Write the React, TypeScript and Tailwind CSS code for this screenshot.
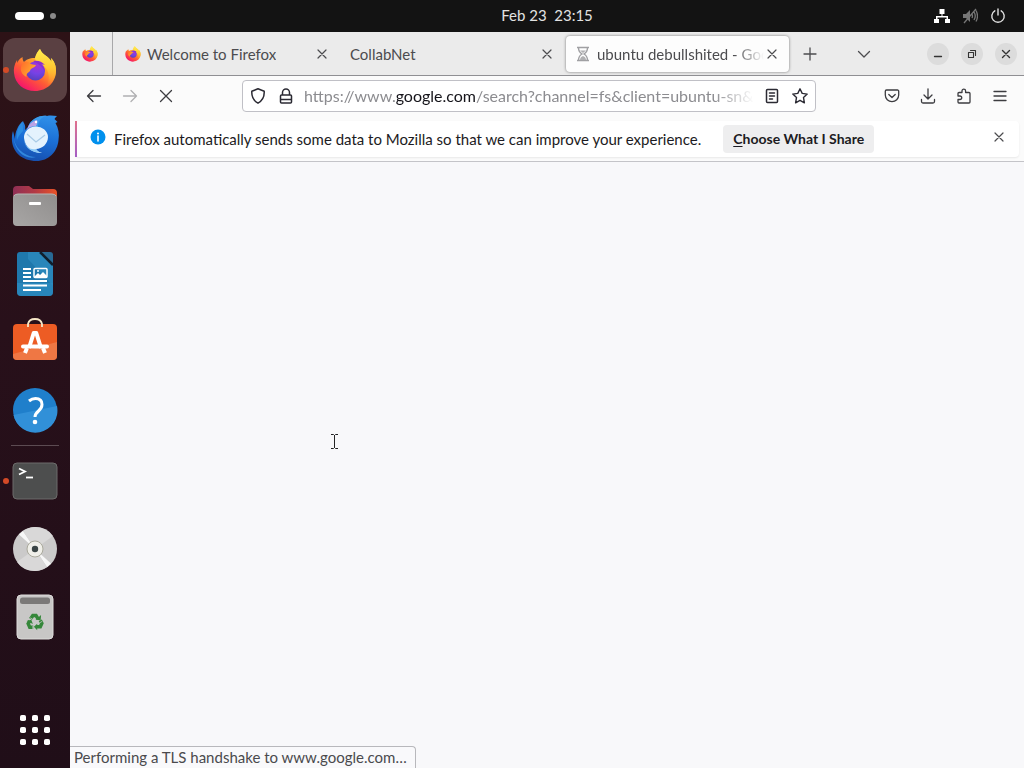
import { useId, useState, type ReactNode } from "react";

type IconProps = { className?: string };

function FirefoxLogo({ className }: IconProps) {
  const id = useId();
  return (
    <svg viewBox="0 0 44 44" className={className} aria-hidden="true">
      <defs>
        <linearGradient id={`${id}-body`} x1="0.85" y1="0.1" x2="0.25" y2="0.95">
          <stop offset="0" stopColor="#ffe04a" />
          <stop offset="0.35" stopColor="#ffa62b" />
          <stop offset="0.65" stopColor="#ff5a36" />
          <stop offset="1" stopColor="#f5156c" />
        </linearGradient>
        <linearGradient id={`${id}-flame`} x1="0.5" y1="0" x2="0.5" y2="1">
          <stop offset="0" stopColor="#fff04f" />
          <stop offset="0.5" stopColor="#ffc933" />
          <stop offset="1" stopColor="#ff9a2e" stopOpacity="0" />
        </linearGradient>
        <radialGradient id={`${id}-globe`} cx="0.6" cy="0.2" r="0.9">
          <stop offset="0" stopColor="#a634d6" />
          <stop offset="0.5" stopColor="#7542e5" />
          <stop offset="1" stopColor="#4f3fb5" />
        </radialGradient>
        <linearGradient id={`${id}-head`} x1="0" y1="0" x2="1" y2="0.6">
          <stop offset="0" stopColor="#ff6a2b" />
          <stop offset="1" stopColor="#ffb12e" />
        </linearGradient>
      </defs>
      <path
        d="M27 1c-2 2-4 5-5 9-6 0-9 2-11 4-1-1-1.500-3-1.500-5C6 11 5 13 4.500 15 4.500 14 4 13 4 12 1 17 .5 21 1 25c1 11 10 18 21 18 12 0 21-9 21-20 0-6-2-10-5-13 .5 2 .5 3 .5 4C36 8 29 7 27 1z"
        fill={`url(#${id}-body)`}
      />
      <path d="M27 1c2 6 9 7 11.500 13 0-1 0-2-.5-4 3 3 5 7 5 13 0 6-4 12-9 15 4-10 1-18-5-21-4-2-7-4-7-7 1-4 3-7 5-9z" fill={`url(#${id}-flame)`} />
      <circle cx="22.500" cy="23" r="9.500" fill={`url(#${id}-globe)`} />
      <path d="M20 13c4-1 9 0 12 4-2-1-3-1-4-.5 3 2 4 5 4 7-3-6-8-8-12-10.500z" fill="#8b2fd0" />
      <path
        d="M11 14c2-.5 4 0 5.500 1 2 1.500 4.500 1.500 6.500 2-.5 2-3 2.500-5 4-1 .8-.6 2-2 3-1.500 1-3 2-2.500 5C10 27 7 24 8 19c.5-2 1.500-4 3-5z"
        fill={`url(#${id}-head)`}
      />
    </svg>
  );
}

function ThunderbirdLogo({ className }: IconProps) {
  const id = useId();
  return (
    <svg viewBox="0 0 50 48" className={className} aria-hidden="true">
      <defs>
        <linearGradient id={`${id}-b`} x1="0.6" y1="0" x2="0.4" y2="1">
          <stop offset="0" stopColor="#2f8fe8" />
          <stop offset="0.5" stopColor="#1b6fd6" />
          <stop offset="1" stopColor="#164fae" />
        </linearGradient>
      </defs>
      <path
        d="M18 13c3-8 11-12 19-11 4-1 7 0 10 0-1 1-2 2-2.500 3l3 3-2 1c3 5 4 11 3 17-1 12-10 21-22 21C12 47 3 38 2 27c-.3-4 0-7 1-10l2 8c0-7 3-14 8-18 1 3 3 4 2 9z"
        fill={`url(#${id}-b)`}
      />
      <path d="M12 8c-4 5-6 11-5 18 1-3 3-6 6-9 0-4 0-6-1-9z" fill="#2b8ce0" />
      <path d="M18 13c3-8 11-12 19-11-6 1-9 5-9 11-4 0-6-1-10 0z" fill="#3a9bea" />
      <path d="M27 6c-5 1-9 5-10 10 2-3 5-4 9-4 1-2 2-4 1-6z" fill="#b9a3e6" />
      <circle cx="26" cy="8" r="1.200" fill="#fff" />
      <path d="M4 25c2 12 14 18 22 18-10 3-21-5-22-18z" fill="#3d9cec" opacity="0.700" />
      <path d="M14 24a12 11 0 0 1 24-1c0 7-6 12-12 12 1 2 3 3 6 4-10 0-17-6-18-15z" fill="#e4f2fd" />
      <path d="M14 26c2 8 7 10 12 9 1 2 3 3 6 4-10 0-17-5-18-13z" fill="#8cc9f6" />
      <path d="M17 20l9 8 9-7" fill="none" stroke="#a9cbe6" strokeWidth="1.300" />
    </svg>
  );
}

function FilesLogo() {
  const id = useId();
  return (
    <svg viewBox="0 0 46 42" className="h-[42px] w-[46px]" aria-hidden="true">
      <defs>
        <linearGradient id={`${id}-t`}>
          <stop offset="0" stopColor="#8f2f55" />
          <stop offset="0.500" stopColor="#b33a45" />
          <stop offset="1" stopColor="#ea5327" />
        </linearGradient>
        <linearGradient id={`${id}-f`} x1="0" y1="1" x2="1" y2="0">
          <stop offset="0" stopColor="#a8a6a5" />
          <stop offset="1" stopColor="#908e8d" />
        </linearGradient>
      </defs>
      <path d="M1 5a4 4 0 0 1 4-4h12l4 3h20a4 4 0 0 1 4 4v12H1z" fill={`url(#${id}-t)`} />
      <rect x="1" y="9" width="44" height="32" rx="4" fill={`url(#${id}-f)`} />
      <path d="M2 11q1-2 4-2h34q3 0 4 2" fill="none" stroke="#b8b5b3" />
      <rect x="17" y="17" width="12" height="3" rx="1" fill="#fff" />
    </svg>
  );
}

function WriterLogo() {
  return (
    <svg viewBox="0 0 38 46" className="h-[46px] w-[38px]" aria-hidden="true">
      <path d="M4 1h22l11 12v28a4 4 0 0 1-4 4H5a4 4 0 0 1-4-4V4a3 3 0 0 1 3-3z" fill="#1f78ac" />
      <path d="M12 1h14l11 12v22L12 8z" fill="#2986ba" />
      <path d="M1 32h36v9a4 4 0 0 1-4 4H5a4 4 0 0 1-4-4z" fill="#2e8fc4" opacity="0.600" />
      <path d="M25 1h9a3 3 0 0 1 3 3v10z" fill="#286a95" />
      <path d="M24 1l13 13" stroke="#101e2c" strokeWidth="2.500" />
      <path d="M7 18h8M7 22h8M7 26h8M7 30h24M7 34.500h24M7 39h18" stroke="#fff" strokeWidth="2" />
      <rect x="18" y="17.500" width="13" height="9" rx="1" fill="none" stroke="#fff" strokeWidth="1.500" />
      <path d="M18 26l4-4 2 2 3-3 4 4v2H18z" fill="#fff" />
      <circle cx="22" cy="20" r="1" fill="#fff" />
    </svg>
  );
}

function SoftwareLogo() {
  return (
    <svg viewBox="0 0 46 48" className="h-12 w-[46px]" aria-hidden="true">
      <rect x="1" y="6" width="44" height="36" rx="4" fill="#ed5c24" />
      <path d="M45 24v14a4 4 0 0 1-4 4H5a4 4 0 0 1-4-4v-2z" fill="#f08352" opacity="0.700" />
      <path d="M16 9V6q1-5 7-5t7 5v3" fill="none" stroke="#f7e8c8" strokeWidth="1.800" />
      <path d="M17 30l4.700-15h2.600L29 30" fill="none" stroke="#fff" strokeWidth="4" strokeLinejoin="round" />
      <path d="M11 28.500h24" stroke="#fff" strokeWidth="4" strokeLinecap="round" />
      <path d="M15 30l-2 5M31 30l2 5" stroke="#fff" strokeWidth="4" />
    </svg>
  );
}

function HelpLogo() {
  return (
    <svg viewBox="0 0 46 46" className="size-[46px]" aria-hidden="true">
      <circle cx="23" cy="23" r="22" fill="#1f7fcb" />
      <path d="M45 19a22 22 0 0 1-43.500 9z" fill="#3190d8" />
      <path d="M17 14q3-2.500 6.500-2.500 6.500 0 6.500 6 0 3.500-3.500 6.500-3.500 3-3.500 6" fill="none" stroke="#fff" strokeWidth="3" />
      <circle cx="23" cy="35" r="2.300" fill="#fff" />
    </svg>
  );
}

function TerminalLogo() {
  return (
    <svg viewBox="0 0 46 38" className="h-[38px] w-[46px]" aria-hidden="true">
      <rect x="1" y="1" width="44" height="36" rx="4" fill="#4d4e4e" stroke="#6c6b6a" strokeWidth="1" />
      <path d="M7 6.500l6 3-6 3" fill="none" stroke="#fff" strokeWidth="1.800" />
      <path d="M14 15.500h7" stroke="#fff" strokeWidth="1.800" />
    </svg>
  );
}

function DiscLogo() {
  return (
    <svg viewBox="0 0 46 46" className="size-[46px]" aria-hidden="true">
      <circle cx="23" cy="23" r="22" fill="#cbcaca" />
      <path d="M23 23L7 8.500 11 5zM23 23l16 14.500-4 3.500z" fill="#f7f7f7" />
      <path d="M23 23L11 5q6-4 12-4 12 0 18 9z" fill="#d9d8d8" />
      <path d="M23 23l12 18q-6 4-12 4-12 0-18-9z" fill="#d9d8d8" />
      <circle cx="23" cy="23" r="8" fill="#f0efe9" stroke="#aaa99c" strokeWidth="1" />
      <circle cx="23" cy="23" r="3.200" fill="#3b4545" />
    </svg>
  );
}

function TrashLogo() {
  return (
    <svg viewBox="0 0 38 46" className="h-[46px] w-[38px]" aria-hidden="true">
      <rect x="1" y="1" width="36" height="44" rx="4" fill="#c8c7c6" stroke="#dddcdb" />
      <rect x="4" y="3.500" width="30" height="6.500" rx="2.500" fill="#7b7978" />
      <g transform="translate(4 5.500) scale(0.780)">
        <g fill="none" stroke="#35873a" strokeWidth="4.500">
          <path d="M13.500 25l3-4.500h4l2.500 4" />
          <path d="M26 26.500l2 4-2 4.500h-5" />
          <path d="M17 35.500h-4.500l-2-4.500 2-3.500" />
        </g>
        <g fill="#35873a">
          <path d="M20 26l6.500.5L27 20z" />
          <path d="M22 31v8.500L17.800 35z" />
          <path d="M8.500 27.500l6-1.500 2 5.500z" />
        </g>
        <path d="M13 23.500l3.500 2M25 30l3.500-2M16.500 33.500V38" stroke="#c8c7c6" strokeWidth="1" />
      </g>
    </svg>
  );
}

function AppGridLogo() {
  return (
    <svg viewBox="0 0 32 32" className="size-8" fill="#fff" aria-hidden="true">
      {[1, 13, 25].map((y) => [1, 13, 25].map((x) => <rect key={`${x}-${y}`} x={x} y={y} width="6" height="6" rx="1.800" />))}
    </svg>
  );
}

// 16px line icon used across the browser toolbar
function Glyph({ children, width = 1.3, className = "size-4" }: { children: ReactNode; width?: number; className?: string }) {
  return (
    <svg
      viewBox="0 0 16 16"
      className={className}
      fill="none"
      stroke="currentColor"
      strokeWidth={width}
      strokeLinecap="round"
      strokeLinejoin="round"
      aria-hidden="true"
    >
      {children}
    </svg>
  );
}

function CloseGlyph() {
  return (
    <Glyph width={1.2}>
      <path d="M4 4l8 8M12 4l-8 8" />
    </Glyph>
  );
}

function DockItem({ label, active, running, children }: { label: string; active?: boolean; running?: boolean; children: ReactNode }) {
  return (
    <li className="relative flex justify-center">
      {running ? <span className="absolute top-1/2 left-[3px] size-[6px] -translate-y-1/2 rounded-full bg-[#d34a27]" /> : null}
      <button
        type="button"
        aria-label={label}
        className={active ? "flex size-16 items-center justify-center rounded-xl bg-[#5a4042]" : "flex size-16 items-center justify-center rounded-xl"}
      >
        {children}
      </button>
    </li>
  );
}

function Dock() {
  return (
    <nav aria-label="Dock" className="flex w-[70px] shrink-0 flex-col bg-gradient-to-b from-[#2d1216] via-[#28101a] via-40% to-[#200e18] py-[6px]">
      <ul className="flex flex-col gap-1">
        <DockItem label="Firefox" active running>
          <FirefoxLogo className="size-11" />
        </DockItem>
        <DockItem label="Thunderbird">
          <ThunderbirdLogo className="h-12 w-[50px]" />
        </DockItem>
        <DockItem label="Files">
          <FilesLogo />
        </DockItem>
        <DockItem label="LibreOffice Writer">
          <WriterLogo />
        </DockItem>
        <DockItem label="Ubuntu Software">
          <SoftwareLogo />
        </DockItem>
        <DockItem label="Help">
          <HelpLogo />
        </DockItem>
      </ul>
      <hr className="mx-[11px] my-[3px] border-[#5c4b52]" />
      <ul className="flex flex-col gap-1">
        <DockItem label="Terminal" running>
          <TerminalLogo />
        </DockItem>
        <DockItem label="Disc">
          <DiscLogo />
        </DockItem>
        <DockItem label="Trash">
          <TrashLogo />
        </DockItem>
      </ul>
      <ul className="mt-auto">
        <DockItem label="Show Applications">
          <AppGridLogo />
        </DockItem>
      </ul>
    </nav>
  );
}

function TopBar() {
  return (
    <header className="flex h-8 shrink-0 items-center bg-[#131313] text-[#e2e2e2]">
      <button type="button" aria-label="Activities" className="flex w-[70px] items-center gap-[6px] pl-[15px]">
        <span className="h-2 w-[29px] rounded-full bg-white" />
        <span className="size-[6px] rounded-full bg-[#8a8a8a]" />
      </button>
      <div className="flex-1 pl-[18px]" />
      <button type="button" className="pb-[2px] text-[15px] leading-5 whitespace-pre">
        {"Feb 23  23:15"}
      </button>
      <div className="flex flex-1 items-center justify-end gap-3 pr-[18px]">
        <svg viewBox="0 0 16 16" className="size-4" fill="#fff" aria-label="Wired network" role="img">
          <path d="M5.500 1h5v5h-2v2H14v3h2v4h-5v-4h1.500V9.500h-9V11H5v4H0v-4h2V8h5.500V6h-2z" />
        </svg>
        <svg viewBox="0 0 16 16" className="size-4" fill="none" stroke="#777" strokeWidth="1.300" aria-label="Muted" role="img">
          <path d="M1 6h3l4-4v12l-4-4H1z" fill="#777" stroke="none" />
          <path d="M10 6q1 2 0 4M12 4q2.500 4 0 8M14 2.500q3 5.500 0 11M2 15L14 1" />
        </svg>
        <svg viewBox="0 0 16 16" className="size-4" fill="none" stroke="#e2e2e2" strokeWidth="1.400" strokeLinecap="round" aria-label="Power" role="img">
          <path d="M8 1v6M4.800 2.800a6.200 6.200 0 1 0 6.400 0" />
        </svg>
      </div>
    </header>
  );
}

function TabBar() {
  return (
    <div className="flex h-11 shrink-0 items-center border-b border-[#8f8f93] bg-[#ebebeb] text-[15px] leading-5 text-[#4c4c4f]">
      <div role="tablist" className="flex h-full min-w-0 items-center">
        <button type="button" role="tab" aria-label="Firefox View" className="flex h-full w-[43px] shrink-0 items-center border-r border-[#a8a8aa] pl-3">
          <FirefoxLogo className="size-4" />
        </button>
        <div className="flex w-[225px] min-w-0 items-center pr-2 pl-3">
          <button type="button" role="tab" className="flex min-w-0 flex-1 items-center gap-[6px]">
            <FirefoxLogo className="size-4 shrink-0" />
            <span className="truncate">Welcome to Firefox</span>
          </button>
          <button type="button" aria-label="Close Welcome to Firefox">
            <CloseGlyph />
          </button>
        </div>
        <div className="flex w-[225px] min-w-0 items-center pr-2 pl-3">
          <button type="button" role="tab" className="min-w-0 flex-1 truncate text-left">
            CollabNet
          </button>
          <button type="button" aria-label="Close CollabNet">
            <CloseGlyph />
          </button>
        </div>
        <div className="ml-[3px] flex h-9 w-[223px] min-w-0 items-center rounded-sm bg-[#fdfdfd] px-[9px] shadow-[0_0_3px_rgba(0,0,0,0.5)]">
          <button type="button" role="tab" aria-selected="true" className="flex min-w-0 flex-1 items-center gap-[6px]">
            <svg viewBox="0 0 16 16" className="size-4 shrink-0" fill="none" stroke="#a0a0a3" strokeWidth="1.400" aria-hidden="true">
              <path d="M2 1.500h12M2 14.500h12M3.500 1.500q0 4.500 3.500 6.500-3.500 2-3.500 6.500M12.500 1.500q0 4.500-3.500 6.500 3.500 2 3.500 6.500" />
              <path d="M5 4.500h6L8 7zM5 14q0-3 3-4 3 1 3 4z" fill="#b0b0b2" stroke="none" />
            </svg>
            <span className="min-w-0 overflow-hidden whitespace-nowrap [mask-image:linear-gradient(to_right,black_82%,transparent)]">
              ubuntu debullshited - Google Search
            </span>
          </button>
          <button type="button" aria-label="Close tab">
            <CloseGlyph />
          </button>
        </div>
      </div>
      <button type="button" aria-label="New tab" className="ml-[13px] shrink-0">
        <Glyph>
          <path d="M8 2v12M2 8h12" />
        </Glyph>
      </button>
      <button type="button" aria-label="List all tabs" className="ml-[38px] shrink-0">
        <Glyph>
          <path d="M2.500 5.500L8 11l5.500-5.500" />
        </Glyph>
      </button>
      <div className="ml-auto flex shrink-0 items-center gap-3 pr-[7px] text-[#333]">
        <button type="button" aria-label="Minimize" className="flex size-[22px] items-center justify-center rounded-full bg-[#dcdcdc]">
          <Glyph>
            <path d="M4.500 10.500h7" />
          </Glyph>
        </button>
        <button type="button" aria-label="Restore" className="flex size-[22px] items-center justify-center rounded-full bg-[#dcdcdc]">
          <Glyph width={1.1}>
            <path d="M4.500 6.500h5v5h-5zM6.500 4.500h5v5" />
          </Glyph>
        </button>
        <button type="button" aria-label="Close window" className="flex size-[22px] items-center justify-center rounded-full bg-[#dcdcdc]">
          <Glyph width={1.4}>
            <path d="M4.500 4.500l7 7M11.500 4.500l-7 7" />
          </Glyph>
        </button>
      </div>
    </div>
  );
}

function ToolButton({ label, dim, children }: { label: string; dim?: boolean; children: ReactNode }) {
  return (
    <button
      type="button"
      aria-label={label}
      disabled={dim}
      className={dim ? "flex h-8 w-9 shrink-0 items-center justify-center text-[#b0b0b2]" : "flex h-8 w-9 shrink-0 items-center justify-center text-[#3c3c40]"}
    >
      {children}
    </button>
  );
}

function NavBar() {
  const [url, setUrl] = useState("https://www.google.com/search?channel=fs&client=ubuntu-sn&q=ubuntu+debullshited");
  const [, prefix, domain, rest] = /^(https?:\/\/(?:www\.)?)([^/]*)(.*)$/.exec(url) ?? ["", "", url, ""];

  return (
    <div className="flex h-10 shrink-0 items-center px-[6px]">
      <ToolButton label="Back">
        <Glyph>
          <path d="M1.500 8h13M7 2.500L1.500 8 7 13.500" />
        </Glyph>
      </ToolButton>
      <ToolButton label="Forward" dim>
        <Glyph>
          <path d="M1.500 8h13M9 2.500L14.500 8 9 13.500" />
        </Glyph>
      </ToolButton>
      <ToolButton label="Stop">
        <Glyph>
          <path d="M2.500 2.500l11 11M13.500 2.500l-11 11" />
        </Glyph>
      </ToolButton>

      <div className="mx-[58px] flex h-8 min-w-0 flex-1 items-center gap-[10px] rounded-sm border border-[#c0c0c6] bg-white px-[7px] text-[#2b2a33]">
        <div className="flex items-center gap-3">
          <Glyph width={1.5}>
            <path d="M8 .8l6.200 2.400q.5 8.300-6.200 12Q1.300 11.500 1.800 3.200z" />
          </Glyph>
          <Glyph width={1.5}>
            <path d="M4.500 7V4.500a3.500 3.500 0 0 1 7 0V7M3.500 7h9a1 1 0 0 1 1 1v6a1 1 0 0 1-1 1h-9a1 1 0 0 1-1-1V8a1 1 0 0 1 1-1zM3 11.500h10" />
          </Glyph>
        </div>
        <div className="relative min-w-0 flex-1 overflow-hidden text-base leading-5 whitespace-nowrap text-[#8c8c90] [mask-image:linear-gradient(to_right,black_91%,transparent)]">
          <span aria-hidden="true">
            {prefix}
            <span className="text-[#15141a]">{domain}</span>
            {rest}
          </span>
          <input
            type="text"
            aria-label="Address"
            value={url}
            onChange={(event) => setUrl(event.target.value)}
            className="absolute inset-0 w-full bg-transparent text-transparent caret-black outline-none"
          />
        </div>
        <div className="flex items-center gap-3">
          <button type="button" aria-label="Reader view">
            <Glyph width={1.5}>
              <path d="M3.500 1.500h9a1 1 0 0 1 1 1v11a1 1 0 0 1-1 1h-9a1 1 0 0 1-1-1v-11a1 1 0 0 1 1-1zM5.500 5h5M5.500 8h5M5.500 11h3" />
            </Glyph>
          </button>
          <button type="button" aria-label="Bookmark this page">
            <Glyph width={1.4}>
              <path d="M8 .8l2.200 4.600 5 .7-3.700 3.500.9 5.200L8 12.300l-4.400 2.500.9-5.200L.8 6.100l5-.7z" />
            </Glyph>
          </button>
        </div>
      </div>

      <ToolButton label="Save to Pocket">
        <Glyph>
          <path d="M2.500 2h11a1.200 1.200 0 0 1 1.200 1.200V7a6.700 6.700 0 0 1-13.400 0V3.200A1.200 1.200 0 0 1 2.500 2zM4.800 6.500L8 9.500l3.200-3" />
        </Glyph>
      </ToolButton>
      <ToolButton label="Downloads">
        <Glyph>
          <path d="M8 .8v10M4 7l4 4 4-4M1.500 11.500v2a1.500 1.500 0 0 0 1.500 1.500h10a1.500 1.500 0 0 0 1.500-1.500v-2" />
        </Glyph>
      </ToolButton>
      <ToolButton label="Extensions">
        <Glyph>
          <path d="M2 5.500a1 1 0 0 1 1-1h3V3a1.800 1.800 0 0 1 3.600 0v1.500h3.400a1 1 0 0 1 1 1V14a1 1 0 0 1-1 1H3a1 1 0 0 1-1-1v-2.500h2a1.700 1.700 0 0 0 0-3.500H2z" />
        </Glyph>
      </ToolButton>
      <ToolButton label="Application menu">
        <Glyph>
          <path d="M2 3.500h12M2 8h12M2 12.500h12" />
        </Glyph>
      </ToolButton>
    </div>
  );
}

function DataNotice({ onClose }: { onClose: () => void }) {
  return (
    <div className="mx-[5px] mt-[5px] flex h-9 shrink-0 items-center rounded-sm bg-white pr-3 shadow-[0_1px_2px_rgba(0,0,0,0.08)]">
      <span className="h-full w-[2px] bg-gradient-to-b from-[#e0708c] to-[#a45cc4]" />
      <svg viewBox="0 0 16 16" className="-mt-1 mr-2 ml-[13px] size-4 shrink-0" aria-hidden="true">
        <circle cx="8" cy="8" r="7.500" fill="#0090ed" />
        <circle cx="8" cy="4.500" r="1" fill="#fff" />
        <path d="M8 7v5" stroke="#fff" strokeWidth="1.600" strokeLinecap="round" />
      </svg>
      <p className="truncate text-[15px] leading-5 text-[#1c1b22]">
        Firefox automatically sends some data to Mozilla so that we can improve your experience.
      </p>
      <button type="button" className="ml-[22px] h-7 w-[151px] shrink-0 rounded-sm bg-[#eeeeef] text-sm font-bold whitespace-nowrap text-[#1c1b22]">
        <span className="underline underline-offset-2">C</span>hoose What I Share
      </button>
      <button type="button" aria-label="Close notice" onClick={onClose} className="-mt-1 ml-auto text-[#4c4c4f]">
        <CloseGlyph />
      </button>
    </div>
  );
}

export default function App() {
  const [noticeOpen, setNoticeOpen] = useState(true);

  return (
    <div className="flex h-screen min-h-[720px] flex-col overflow-hidden font-['Lato',sans-serif]">
      <TopBar />
      <div className="flex min-h-0 flex-1">
        <Dock />
        <div className="flex min-w-0 flex-1 flex-col bg-[#fbfbfb]">
          <TabBar />
          <NavBar />
          {noticeOpen ? <DataNotice onClose={() => setNoticeOpen(false)} /> : null}
          <main className="relative mt-1 flex-1 border-t border-[#c4c4c8] bg-[#f8f8fa]">
            <svg viewBox="0 0 9 17" className="absolute top-[271px] left-[260px] h-[17px] w-[9px]" fill="none" stroke="#222" aria-hidden="true">
              <path d="M1 1.500h2.500l1 1 1-1H8M4.500 2v13M1 15.500h2.500l1-1 1 1H8" />
            </svg>
            <p
              role="status"
              className="absolute bottom-0 left-0 rounded-tr-sm border-t border-r border-[#b8b8bc] bg-[#f9f9fb] pr-2 pl-1 text-[15px] leading-[21px] text-[#4a4a4d]"
            >
              Performing a TLS handshake to www.google.com…
            </p>
          </main>
        </div>
      </div>
    </div>
  );
}
